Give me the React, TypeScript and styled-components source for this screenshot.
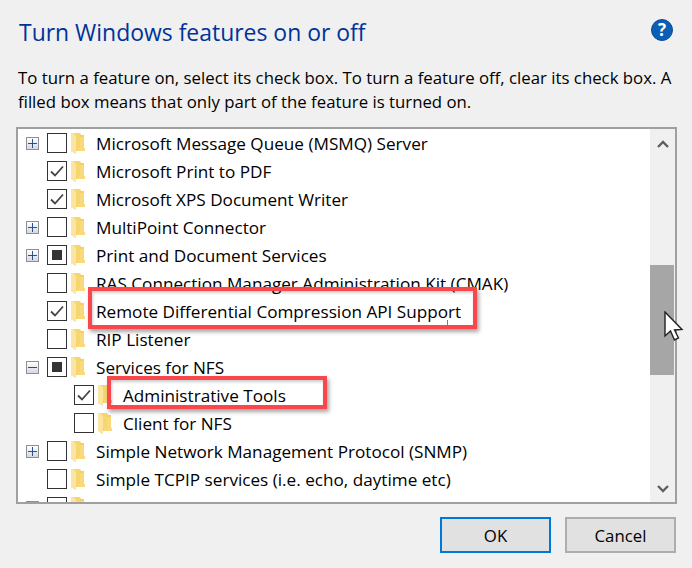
import { ReactNode } from "react";
import styled, { createGlobalStyle } from "styled-components";

const GlobalStyle = createGlobalStyle`
  html, body {
    margin: 0;
    padding: 0;
    background: #f0f0f0;
  }
  body {
    font-family: "Open Sans", "Noto Sans", "Liberation Sans", sans-serif;
    color: #000;
  }
`;

type CheckState = "off" | "on" | "mixed";
type Expand = "plus" | "minus" | "none";

type Feature = {
  label: string;
  check: CheckState;
  expand: Expand;
  depth?: number;
};

const features: Feature[] = [
  { label: "Microsoft Message Queue (MSMQ) Server", check: "off", expand: "plus" },
  { label: "Microsoft Print to PDF", check: "on", expand: "none" },
  { label: "Microsoft XPS Document Writer", check: "on", expand: "none" },
  { label: "MultiPoint Connector", check: "off", expand: "plus" },
  { label: "Print and Document Services", check: "mixed", expand: "plus" },
  { label: "RAS Connection Manager Administration Kit (CMAK)", check: "off", expand: "none" },
  { label: "Remote Differential Compression API Support", check: "on", expand: "none" },
  { label: "RIP Listener", check: "off", expand: "none" },
  { label: "Services for NFS", check: "mixed", expand: "minus" },
  { label: "Administrative Tools", check: "on", expand: "none", depth: 1 },
  { label: "Client for NFS", check: "off", expand: "none", depth: 1 },
  { label: "Simple Network Management Protocol (SNMP)", check: "off", expand: "plus" },
  { label: "Simple TCPIP services (i.e. echo, daytime etc)", check: "off", expand: "none" },
  { label: "SMB 1.0/CIFS File Sharing Support", check: "off", expand: "plus" },
];

const Folder = () => (
  <FolderIcon viewBox="0 0 14 21">
    <path d="M0 0 H9 L10 2 H13 V15 H14 V18 L5 18 V21 L0 18 Z" fill="#f5cf62" />
    <path d="M6 4 H13 V15 H14 V18 H6 Z" fill="#f9d97c" />
    <path d="M2 0 H9 V15 H5 V18 L2 16 Z" fill="#f6d670" />
    <path d="M0 0 H2.4 L5 3 V21 L0 18 Z" fill="#fce5a0" />
  </FolderIcon>
);

const Row = ({ feature }: { feature: Feature }) => (
  <TreeRow $depth={feature.depth ?? 0}>
    <ExpandBox $kind={feature.expand}>
      {feature.expand !== "none" && <Dash />}
      {feature.expand === "plus" && <DashVertical />}
    </ExpandBox>
    <CheckBox>
      {feature.check === "on" && (
        <svg width="16" height="14" viewBox="0 0 16 14">
          <path d="M2 7.5 L6 11.5 L14 2.5" fill="none" stroke="#444" strokeWidth="1.8" />
        </svg>
      )}
      {feature.check === "mixed" && <MixedFill />}
    </CheckBox>
    <Folder />
    <Label>{feature.label}</Label>
  </TreeRow>
);

const Annotated = ({ children, className }: { children?: ReactNode; className?: string }) => (
  <div className={className}>{children}</div>
);

const App = () => (
  <Dialog>
    <GlobalStyle />
    <Header>
      <Title>Turn Windows features on or off</Title>
      <HelpIcon>?</HelpIcon>
    </Header>
    <Description>
      To turn a feature on, select its check box. To turn a feature off, clear its check box. A
      filled box means that only part of the feature is turned on.
    </Description>
    <TreePanel>
      <TreeList>
        {features.map((feature) => (
          <Row key={feature.label} feature={feature} />
        ))}
      </TreeList>
      <ScrollTrack>
        <ScrollArrow viewBox="0 0 12 8">
          <path d="M1 7 L6 2 L11 7" fill="none" stroke="#606060" strokeWidth="2.4" />
        </ScrollArrow>
        <ScrollThumb />
        <ScrollArrow viewBox="0 0 12 8">
          <path d="M1 1 L6 6 L11 1" fill="none" stroke="#606060" strokeWidth="2.4" />
        </ScrollArrow>
      </ScrollTrack>
      <RemoteMark />
      <ToolsMark />
    </TreePanel>
    <Footer>
      <DialogButton $primary>OK</DialogButton>
      <DialogButton>Cancel</DialogButton>
    </Footer>
    <Cursor viewBox="0 0 20 30">
      <path
        d="M1 1 V25 L6.5 20 L10.5 29 L14.5 27 L10.5 19 L18 18.5 Z"
        fill="#fff"
        stroke="#222"
        strokeWidth="1.4"
      />
    </Cursor>
  </Dialog>
);

const Dialog = styled.div`
  position: relative;
  width: 692px;
  height: 568px;
  box-sizing: border-box;
  padding: 19px 16px 0 16px;
  overflow: hidden;
  background: #f0f0f0;
`;

const Header = styled.div`
  display: flex;
  align-items: center;
  justify-content: space-between;
  height: 26px;
  padding: 0 3px;
`;

const Title = styled.h1`
  margin: 0;
  font-size: 22.95px;
  font-weight: 400;
  line-height: 26px;
  color: #003399;
`;

const HelpIcon = styled.div`
  align-self: flex-start;
  width: 22px;
  height: 22px;
  border-radius: 50%;
  background: #0a5fb4;
  border: 1px solid #0b4c94;
  box-sizing: border-box;
  color: #fff;
  font-size: 17px;
  font-weight: 700;
  line-height: 20px;
  text-align: center;
`;

const Description = styled.p`
  width: 655px;
  margin: 21px 0 13px 2px;
  font-size: 16.8px;
  line-height: 24px;
`;

const TreePanel = styled.div`
  position: relative;
  display: flex;
  width: 661px;
  height: 377px;
  box-sizing: border-box;
  border: 2px solid #a0a0a0;
  background: #fff;
`;

const TreeList = styled.div`
  flex: 1;
  min-width: 0;
  overflow: hidden;
`;

const TreeRow = styled.div<{ $depth: number }>`
  display: flex;
  align-items: center;
  height: 28px;
  padding-left: ${(p) => 8 + p.$depth * 27}px;
  white-space: nowrap;
`;

const ExpandBox = styled.div<{ $kind: Expand }>`
  position: relative;
  flex: none;
  width: 13px;
  height: 13px;
  margin-right: 8px;
  box-sizing: border-box;
  visibility: ${(p) => (p.$kind === "none" ? "hidden" : "visible")};
  border: 1px solid #8a8f9c;
  background: linear-gradient(#ffffff, #d5d8e0);
`;

const Dash = styled.span`
  position: absolute;
  left: 1px;
  top: 5px;
  width: 9px;
  height: 1px;
  background: #2c4f92;
`;

const DashVertical = styled.span`
  position: absolute;
  left: 5px;
  top: 1px;
  width: 1px;
  height: 9px;
  background: #2c4f92;
`;

const CheckBox = styled.div`
  flex: none;
  display: flex;
  align-items: center;
  justify-content: center;
  width: 20px;
  height: 20px;
  box-sizing: border-box;
  border: 1.5px solid #333;
  background: #fff;
`;

const MixedFill = styled.div`
  width: 10px;
  height: 10px;
  background: #333;
`;

const FolderIcon = styled.svg`
  flex: none;
  width: 14px;
  height: 21px;
  margin: 1px 11px 0 4px;
`;

const Label = styled.span`
  margin-top: 2px;
  font-size: 17.15px;
  line-height: 28px;
`;

const ScrollTrack = styled.div`
  flex: none;
  display: flex;
  flex-direction: column;
  align-items: center;
  justify-content: space-between;
  width: 25px;
  padding: 11px 0 9px;
  box-sizing: border-box;
  position: relative;
  background: #f0f0f0;
`;

const ScrollArrow = styled.svg`
  width: 12px;
  height: 8px;
`;

const ScrollThumb = styled.div`
  position: absolute;
  top: 136px;
  left: 0;
  width: 24px;
  height: 110px;
  background: #a6a6a6;
`;

const Mark = styled(Annotated)`
  position: absolute;
  box-sizing: border-box;
  border: 4px solid #f9474c;
  box-shadow: 2px 3px 4px rgba(0, 0, 0, 0.35), inset 1px 2px 3px rgba(0, 0, 0, 0.2);
  pointer-events: none;
`;

const RemoteMark = styled(Mark)`
  left: 70px;
  top: 158px;
  width: 389px;
  height: 42px;

  &::after {
    content: "";
    position: absolute;
    left: 355px;
    top: 29px;
    width: 1px;
    height: 5px;
    background: #f9474c;
  }
`;

const ToolsMark = styled(Mark)`
  left: 89px;
  top: 247px;
  width: 220px;
  height: 33px;
`;

const Footer = styled.div`
  display: flex;
  justify-content: flex-end;
  gap: 14px;
  margin-top: 13px;
`;

const DialogButton = styled.div<{ $primary?: boolean }>`
  width: 111px;
  height: 36px;
  box-sizing: border-box;
  border: 2px solid ${(p) => (p.$primary ? "#0078d7" : "#adadad")};
  background: #e1e1e1;
  font-size: 16.8px;
  line-height: 34px;
  text-align: center;
`;

const Cursor = styled.svg`
  position: absolute;
  left: 664px;
  top: 311px;
  width: 20px;
  height: 30px;
`;

export default App;
